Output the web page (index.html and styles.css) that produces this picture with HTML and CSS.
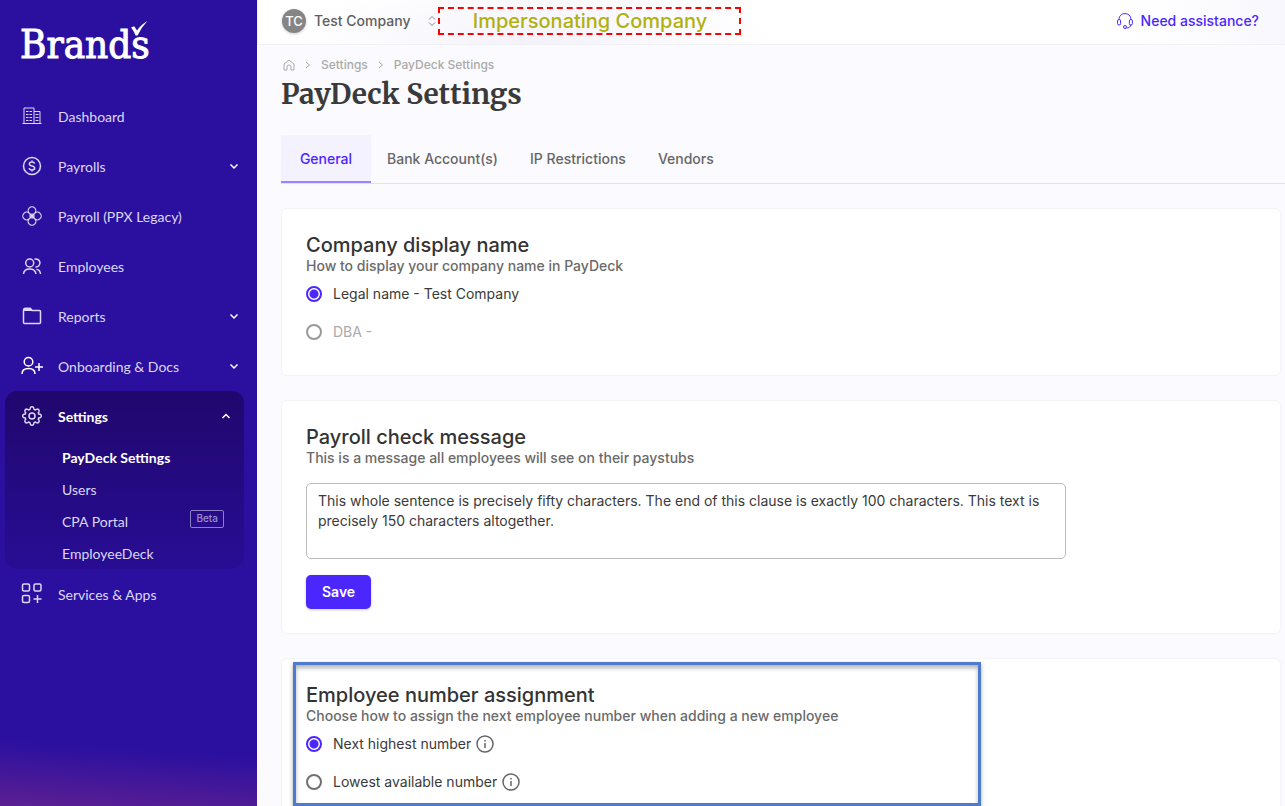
FILE: index.html
```html
<!DOCTYPE html>
<html lang="en">
<head>
    <meta charset="UTF-8">
    <meta name="viewport" content="width=device-width, initial-scale=1.0">
    <title>PayDeck Settings</title>
    <link rel="stylesheet" href="styles.css">
</head>
<body>
    <div class="app">
        <!-- Sidebar -->
        <aside class="sidebar">
            <a href="#" class="logo">Brands
                <svg class="logo-check" width="17" height="15" viewBox="0 0 17 15" fill="#fff"><path d="M0 6.5 3.2 5.2 6 9.6Q10 3.5 16.4 0 10.5 6 6.6 14.5L4.6 14.5Q3 10 0 6.5z"/></svg>
            </a>
            <nav class="nav">
                <a href="#" class="nav-item">
                    <svg class="icon" viewBox="0 0 20 20"><path d="M.5 17.500h19M2 17.500V2h10v15.500M12 5.500h6v12M4 5.500h2.500M7.500 5.500H10M4 8.500h2.500M7.500 8.500H10M4 11.500h2.500M7.500 11.500H10M4 14.500h2.500M7.500 14.500H10M13.500 8.500h3M13.500 11.500h3M13.500 14.500h3" stroke-width="1"/></svg>
                    <span>Dashboard</span>
                </a>
                <a href="#" class="nav-item">
                    <svg class="icon" viewBox="0 0 20 20"><circle cx="10" cy="10" r="8.500"/><path d="M12.600 7.600C12.300 6.500 11.300 6 10 6 8.500 6 7.400 6.700 7.400 7.900c0 2.800 5.300 1.400 5.300 4.200 0 1.200-1.200 1.900-2.700 1.900s-2.600-.6-2.800-1.800M10 4.500V6M10 14v1.500"/></svg>
                    <span>Payrolls</span>
                    <svg class="chevron" viewBox="0 0 10 10"><path d="M1.500 3.500 5 7l3.500-3.500"/></svg>
                </a>
                <a href="#" class="nav-item">
                    <svg class="icon" viewBox="0 0 20 20" ><g stroke-width="1.200"><path d="M7.300 7.300a3.800 3.800 0 1 1 5.400 0L10 9.800zM12.700 7.300a3.800 3.800 0 1 1 0 5.400L10.200 10zM12.700 12.700a3.800 3.800 0 1 1-5.400 0L10 10.200zM7.300 12.700a3.800 3.800 0 1 1 0-5.400L9.800 10z"/><circle cx="10" cy="10" r="2"/></g></svg>
                    <span>Payroll (PPX Legacy)</span>
                </a>
                <a href="#" class="nav-item">
                    <svg class="icon" viewBox="0 0 20 20"><circle cx="7.700" cy="7" r="4"/><path d="M1.500 18c.3-3.500 2.800-5 6.200-5s5.900 1.500 6.200 5M12.500 3.200a4 4 0 1 1 1 7.700M14.500 13.200c2.500.5 3.800 2.100 4 4.800"/></svg>
                    <span>Employees</span>
                </a>
                <a href="#" class="nav-item">
                    <svg class="icon" viewBox="0 0 20 20"><path d="M1.500 4.500V16.500q0 1 1 1h15q1 0 1-1V5.500q0-1-1-1H10L8.500 2.500h-6q-1 0-1 2z"/><path d="M2 4.300 3 2.500h5L9.500 4.300z" fill="#cfcbf0"/></svg>
                    <span>Reports</span>
                    <svg class="chevron" viewBox="0 0 10 10"><path d="M1.500 3.500 5 7l3.500-3.500"/></svg>
                </a>
                <a href="#" class="nav-item">
                    <svg class="icon icon-bright" viewBox="0 0 20 20"><circle cx="6.500" cy="5.800" r="4.300"/><path d="M0 18c0-4 2.500-5.500 6.500-5.500S13 14 13 18M17 7v8M13 11h8"/></svg>
                    <span>Onboarding &amp; Docs</span>
                    <svg class="chevron" viewBox="0 0 10 10"><path d="M1.500 3.500 5 7l3.500-3.500"/></svg>
                </a>
                <div class="nav-group">
                    <a href="#" class="nav-item active">
                        <svg class="icon" viewBox="0 0 20 20"><path d="M8.200 2.200Q8.500.8 10 .8t1.800 1.400l.3 1.200 1.200.5 1.100-.6q1.300-.7 2.200.3t.3 2.200l-.6 1 .5 1.200 1.200.3q1.300.3 1.300 1.700t-1.300 1.700l-1.200.3-.5 1.200.6 1q.7 1.300-.3 2.200t-2.200.3l-1.100-.6-1.200.5-.3 1.200q-.3 1.400-1.800 1.400t-1.800-1.400l-.3-1.200-1.200-.5-1.100.6q-1.200.7-2.200-.3t-.3-2.200l.6-1-.5-1.200-1.200-.3Q.7 11.400.7 10t1.300-1.700L3.200 8l.5-1.200-.6-1q-.7-1.200.3-2.200t2.200-.3l1.100.6 1.200-.5z"/><circle cx="10" cy="10" r="3"/></svg>
                        <span>Settings</span>
                        <svg class="chevron" viewBox="0 0 10 10"><path d="M1.500 7 5 3.500 8.500 7"/></svg>
                    </a>
                    <a href="#" class="sub-item active">PayDeck Settings</a>
                    <a href="#" class="sub-item">Users</a>
                    <a href="#" class="sub-item">CPA Portal <span class="badge">Beta</span></a>
                    <a href="#" class="sub-item">EmployeeDeck</a>
                </div>
                <a href="#" class="nav-item">
                    <svg class="icon" viewBox="0 0 20 20"><rect x=".5" y="0" width="7" height="7" rx="1.500"/><rect x="12" y="0" width="7" height="7" rx="1.500"/><rect x=".5" y="11.500" width="7" height="7" rx="1.500"/><path d="M15.500 11v8M11.500 15h8"/></svg>
                    <span>Services &amp; Apps</span>
                </a>
            </nav>
        </aside>

        <main class="main">
            <!-- Top bar -->
            <header class="topbar">
                <button type="button" class="company">
                    <span class="avatar">TC</span>
                    <span class="company-name">Test Company</span>
                    <svg width="8" height="12" viewBox="0 0 8 12"><path d="M1 4.500 4 1.500l3 3M1 7.500l3 3 3-3"/></svg>
                </button>
                <div class="impersonating">Impersonating Company</div>
                <a href="#" class="help">
                    <svg width="16" height="16" viewBox="0 0 16 16"><path d="M2 6.500C2 3 4.500.6 8 .6S14 3 14 6.500M14 11.500c-.3 2.300-2 3.600-4.500 3.600"/><rect x=".6" y="6.500" width="3" height="5.500" rx="1.400"/><rect x="12.400" y="6.500" width="3" height="5.500" rx="1.400"/><circle cx="8" cy="14" r="1.500"/></svg>
                    Need assistance?
                </a>
            </header>

            <div class="page-head">
                <nav class="breadcrumb">
                    <a href="#" aria-label="Home"><svg width="12" height="12" viewBox="0 0 12 12"><path d="M1 5 6 1l5 4v6H8V8a2 2 0 0 0-4 0v3H1z"/></svg></a>
                    <svg width="6" height="8" viewBox="0 0 6 8"><path d="m1 1 3.500 3L1 7"/></svg>
                    <a href="#">Settings</a>
                    <svg width="6" height="8" viewBox="0 0 6 8"><path d="m1 1 3.500 3L1 7"/></svg>
                    <a href="#">PayDeck Settings</a>
                </nav>
                <h1>PayDeck Settings</h1>
            </div>

            <nav class="tabs">
                <a href="#" class="tab active">General</a>
                <a href="#" class="tab">Bank Account(s)</a>
                <a href="#" class="tab">IP Restrictions</a>
                <a href="#" class="tab">Vendors</a>
            </nav>

            <div class="cards">
                <section class="card">
                    <h2>Company display name</h2>
                    <p class="hint">How to display your company name in PayDeck</p>
                    <div class="options">
                        <label class="option"><input type="radio" name="display" checked> Legal name - Test Company</label>
                        <label class="option disabled"><input type="radio" name="display" disabled> DBA -</label>
                    </div>
                </section>

                <section class="card">
                    <h2>Payroll check message</h2>
                    <p class="hint" id="message-hint">This is a message all employees will see on their paystubs</p>
                    <textarea class="message" aria-labelledby="message-hint">This whole sentence is precisely fifty characters. The end of this clause is exactly 100 characters. This text is precisely 150 characters altogether.</textarea>
                    <button type="button" class="btn">Save</button>
                </section>

                <section class="card">
                    <div class="highlight"></div>
                    <h2>Employee number assignment</h2>
                    <p class="hint">Choose how to assign the next employee number when adding a new employee</p>
                    <div class="options">
                        <label class="option"><input type="radio" name="number" checked> <span class="option-text">Next highest number
                            <svg class="info" viewBox="0 0 18 18"><circle cx="9" cy="9" r="8"/><path d="M9 8v5M9 5v1.500"/></svg></span></label>
                        <label class="option"><input type="radio" name="number"> <span class="option-text">Lowest available number
                            <svg class="info" viewBox="0 0 18 18"><circle cx="9" cy="9" r="8"/><path d="M9 8v5M9 5v1.500"/></svg></span></label>
                    </div>
                </section>
            </div>
        </main>
    </div>
</body>
</html>
```
FILE: styles.css
```css
* {
    box-sizing: border-box;
}
body {
    margin: 0;
    font-family: Inter, "Liberation Sans", sans-serif;
    font-size: 14px;
    line-height: 20px;
    color: #3a3a3a;
    background: #fbfaff;
}
a {
    color: inherit;
    text-decoration: none;
}
svg {
    flex: none;
    fill: none;
    stroke: currentColor;
    overflow: visible;
}
.app {
    display: flex;
    height: 100vh;
}

/* Sidebar */
.sidebar {
    flex: none;
    width: 257px;
    color: #dcd8f5;
    font-family: Lato, sans-serif;
    font-size: 14px;
    background: linear-gradient(184deg, #2b109f 92%, #5c1f92 100%);
    overflow: hidden;
}
.logo {
    display: block;
    position: relative;
    width: 132px;
    height: 48px;
    margin: 20px 0 23px 20px;
    font-family: "DejaVu Serif Condensed", "DejaVu Serif", serif;
    font-size: 40px;
    line-height: 48px;
    color: #fff;
    -webkit-text-stroke: 1px #fff;
}
.logo-check {
    position: absolute;
    top: 1px;
    right: 4px;
    fill: #fff;
    stroke: none;
}
.nav-item {
    display: flex;
    align-items: center;
    height: 50px;
    padding: 0 18px 0 22px;
}
.nav-item span {
    flex: 1;
    margin-left: 16px;
    padding-top: 1px;
}
.icon {
    width: 20px;
    height: 20px;
    stroke-width: 1.5;
}
.icon-bright {
    color: #fff;
}
.chevron {
    width: 10px;
    height: 10px;
    color: #fff;
    stroke-width: 1.5;
}
.nav-group {
    margin: 0 13px 0 5px;
    border-radius: 12px;
    background: linear-gradient(#20076d, #280d94);
}
.nav-group .nav-item {
    padding: 0 13px 0 17px;
}
.sub-item {
    display: flex;
    justify-content: space-between;
    align-items: center;
    height: 32px;
    padding: 1px 20px 0 57px;
}
.nav-item.active span,
.sub-item.active {
    color: #fff;
    font-weight: bold;
}
.badge {
    height: 18px;
    margin-bottom: 6px;
    padding: 0 5px;
    border: 1px solid #8a7fc6;
    border-radius: 2px;
    font-family: Inter, sans-serif;
    font-size: 10px;
    font-weight: 500;
    line-height: 15px;
    color: #9a91cf;
}

/* Main column */
.main {
    flex: 1;
    min-width: 0;
    overflow-y: auto;
    scrollbar-width: none;
}
.topbar {
    display: flex;
    align-items: center;
    height: 45px;
    padding: 0 26px 2px 24px;
    border-bottom: 1px solid #f1f0f5;
    border-left: 1px solid #f1f0f5;
    background: radial-gradient(ellipse 240px 70px at 27% 100%, #f3f2fb, rgba(255, 255, 255, 0)), linear-gradient(90deg, #fff 85%, #f8f7fd);
}
.company {
    display: flex;
    align-items: center;
    padding: 0;
    border: none;
    background: none;
    font: inherit;
    font-weight: 500;
    color: #5f5f5f;
}
.company svg {
    margin: 0 2px 0 18px;
    color: #888;
}
.avatar {
    width: 24px;
    height: 24px;
    margin-right: 8px;
    border-radius: 50%;
    background: #858585;
    box-shadow: 0 1px 3px rgba(0, 0, 0, 0.2);
    font-size: 13px;
    line-height: 24px;
    text-align: center;
    color: #fff;
}
.impersonating {
    width: 303px;
    border: 2px dashed #f00;
    font-size: 20px;
    font-weight: 500;
    line-height: 24px;
    text-align: center;
    color: #b0b010;
}
.help {
    display: flex;
    align-items: center;
    gap: 8px;
    margin-left: auto;
    font-weight: 500;
    color: #4b26ff;
}

.page-head {
    padding: 10px 24px 22px;
}
.breadcrumb {
    display: flex;
    align-items: center;
    gap: 10px;
    padding-left: 2px;
    font-size: 12px;
    font-weight: 500;
    color: #aaa;
}
.breadcrumb a {
    display: flex;
}
h1 {
    margin: 0;
    font-family: Merriweather, "DejaVu Serif Condensed", "DejaVu Serif", serif;
    font-size: 28px;
    line-height: 38px;
    color: #3a3a3a;
}

.tabs {
    display: flex;
    margin-left: 24px;
    border-bottom: 1px solid #e3e2e8;
}
.tab {
    height: 48px;
    padding: 0 16px;
    font-weight: 500;
    line-height: 48px;
    color: #666;
}
.tab.active {
    min-width: 90px;
    border-bottom: 2px solid #9b85ff;
    background: #f4f2ff;
    text-align: center;
    color: #4b26ff;
}

/* Cards */
.cards {
    display: flex;
    flex-direction: column;
    gap: 24px;
    padding: 24px 4px 24px 24px;
}
.card {
    position: relative;
    padding: 24px;
    border: 1px solid #f4f3f8;
    border-radius: 6px;
    background: #fff;
}
h2 {
    margin: 0;
    font-size: 20px;
    font-weight: 500;
    line-height: 24px;
    color: #333;
}
.hint {
    margin: 0;
    font-weight: 500;
    line-height: 18px;
    color: #6a6a6a;
}
.options {
    display: flex;
    flex-direction: column;
    align-items: flex-start;
    gap: 18px;
    padding: 9px 0;
}
.option {
    display: flex;
    align-items: center;
    gap: 11px;
}
.option.disabled {
    color: #aaa;
}
.option input {
    appearance: none;
    width: 16px;
    height: 16px;
    margin: 0;
    border: 2px solid #707070;
    border-radius: 50%;
}
.option input:checked {
    border-color: #4b26ff;
    background: radial-gradient(circle, #4b26ff 4px, #fff 5px);
}
.option input:disabled {
    border-color: #999;
}
.option-text {
    display: flex;
    align-items: center;
    gap: 5px;
}
.info {
    width: 18px;
    height: 18px;
    color: #666;
    stroke-width: 1.5;
}
.message {
    display: block;
    width: 760px;
    max-width: 100%;
    height: 76px;
    margin: 16px 0;
    padding: 7px 11px;
    border: 1px solid #bbb;
    border-radius: 5px;
    background: #fff;
    font: inherit;
    color: #3a3a3a;
    resize: none;
}
.btn {
    display: block;
    height: 34px;
    padding: 0 16px;
    border: none;
    border-radius: 5px;
    background: #4b26ff;
    box-shadow: 0 1px 3px rgba(0, 0, 0, 0.2);
    font: inherit;
    font-weight: 600;
    color: #fff;
}

/* Frame drawn over the card */
.highlight {
    position: absolute;
    top: 3px;
    left: 11px;
    width: 688px;
    max-width: 100%;
    height: 144px;
    border: 3px solid #4e7bcb;
    box-shadow: 0 2px 4px rgba(0, 0, 0, 0.35), inset 0 3px 4px rgba(0, 0, 0, 0.3);
    pointer-events: none;
}
```
